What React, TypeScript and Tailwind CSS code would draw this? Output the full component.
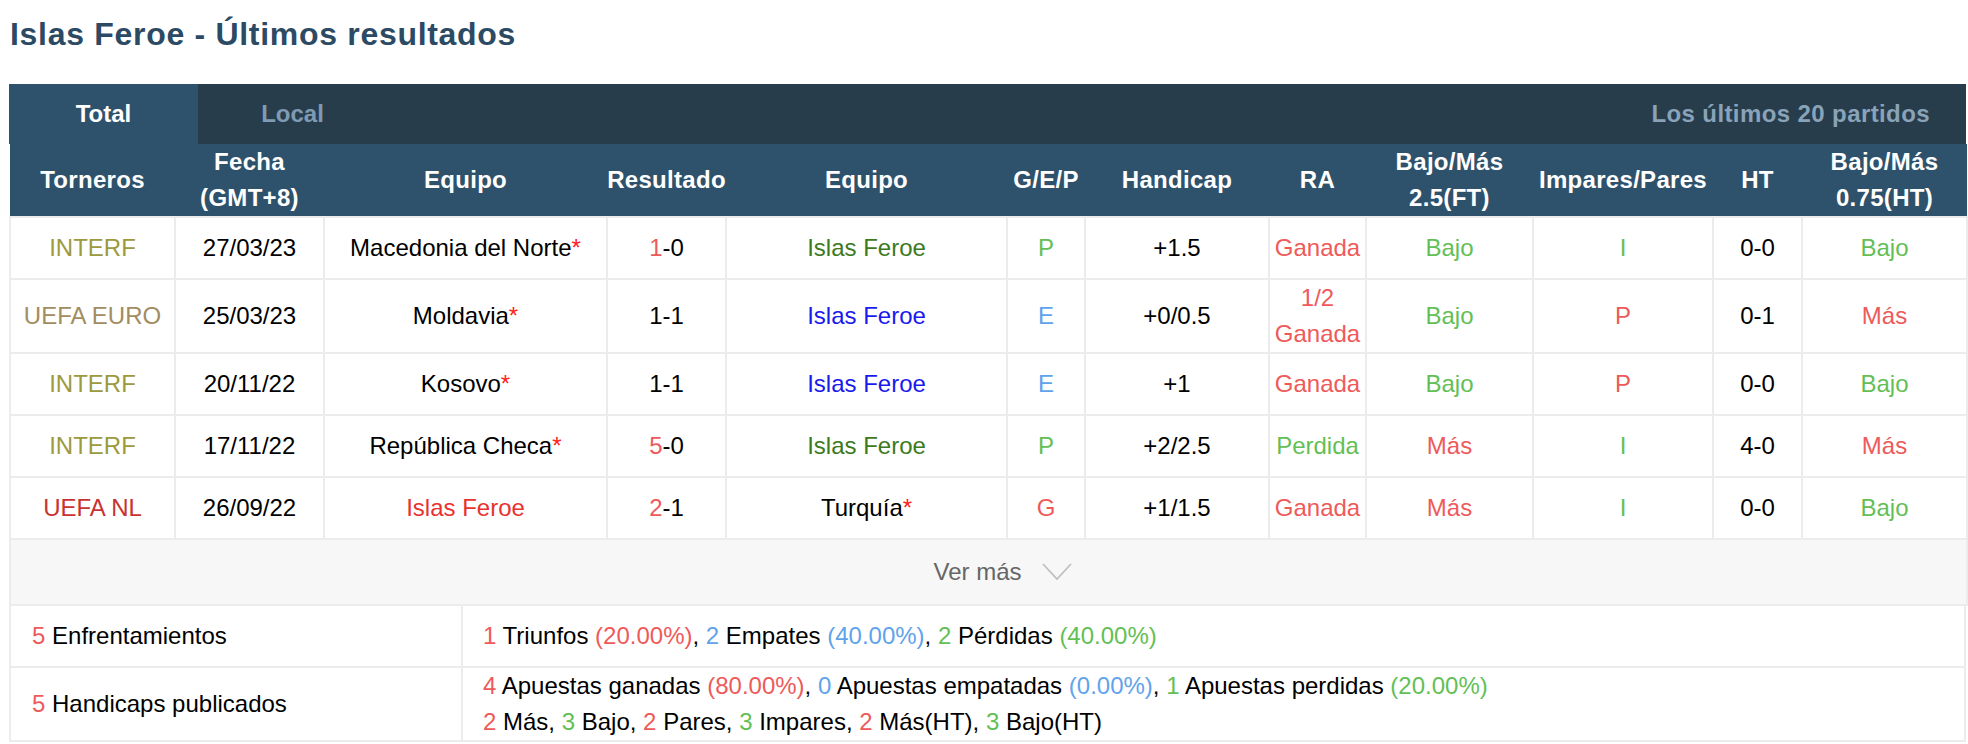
import React from "react"

const RED = "text-[#ee5a5a]"
const GREEN = "text-[#63bf55]"
const BLUE = "text-[#5fa3ec]"

interface Match {
  league: string
  leagueColor: string
  date: string
  home: React.ReactNode
  score: React.ReactNode
  away: React.ReactNode
  gep: string
  gepColor: string
  handicap: string
  ra: React.ReactNode
  ou: string
  oe: string
  ht: string
  ouHt: string
}

const star = <span className="text-[#ff2020]">*</span>

const matches: Match[] = [
  {
    league: "INTERF",
    leagueColor: "text-[#9c9a3c]",
    date: "27/03/23",
    home: <>Macedonia del Norte{star}</>,
    score: (
      <>
        <span className={RED}>1</span>-0
      </>
    ),
    away: <span className="text-[#3c7a1e]">Islas Feroe</span>,
    gep: "P",
    gepColor: GREEN,
    handicap: "+1.5",
    ra: <span className={RED}>Ganada</span>,
    ou: "Bajo",
    oe: "I",
    ht: "0-0",
    ouHt: "Bajo",
  },
  {
    league: "UEFA EURO",
    leagueColor: "text-[#a38c5f]",
    date: "25/03/23",
    home: <>Moldavia{star}</>,
    score: <>1-1</>,
    away: <span className="text-[#1a1aee]">Islas Feroe</span>,
    gep: "E",
    gepColor: BLUE,
    handicap: "+0/0.5",
    ra: (
      <span className={RED}>
        1/2
        <br />
        Ganada
      </span>
    ),
    ou: "Bajo",
    oe: "P",
    ht: "0-1",
    ouHt: "Más",
  },
  {
    league: "INTERF",
    leagueColor: "text-[#9c9a3c]",
    date: "20/11/22",
    home: <>Kosovo{star}</>,
    score: <>1-1</>,
    away: <span className="text-[#1a1aee]">Islas Feroe</span>,
    gep: "E",
    gepColor: BLUE,
    handicap: "+1",
    ra: <span className={RED}>Ganada</span>,
    ou: "Bajo",
    oe: "P",
    ht: "0-0",
    ouHt: "Bajo",
  },
  {
    league: "INTERF",
    leagueColor: "text-[#9c9a3c]",
    date: "17/11/22",
    home: <>República Checa{star}</>,
    score: (
      <>
        <span className={RED}>5</span>-0
      </>
    ),
    away: <span className="text-[#3c7a1e]">Islas Feroe</span>,
    gep: "P",
    gepColor: GREEN,
    handicap: "+2/2.5",
    ra: <span className={GREEN}>Perdida</span>,
    ou: "Más",
    oe: "I",
    ht: "4-0",
    ouHt: "Más",
  },
  {
    league: "UEFA NL",
    leagueColor: "text-[#c83232]",
    date: "26/09/22",
    home: <span className="text-[#e8322f]">Islas Feroe</span>,
    score: (
      <>
        <span className={RED}>2</span>-1
      </>
    ),
    away: <>Turquía{star}</>,
    gep: "G",
    gepColor: RED,
    handicap: "+1/1.5",
    ra: <span className={RED}>Ganada</span>,
    ou: "Más",
    oe: "I",
    ht: "0-0",
    ouHt: "Bajo",
  },
]

const colClasses = [
  "w-[165px]",
  "w-[149px]",
  "w-[283px]",
  "w-[119px]",
  "w-[281px]",
  "w-[78px]",
  "w-[184px]",
  "w-[97px]",
  "w-[167px]",
  "w-[180px]",
  "w-[89px]",
  "w-[165px]",
]

const ouColor = (v: string) => (v === "Bajo" ? GREEN : RED)
const oeColor = (v: string) => (v === "I" ? GREEN : RED)

const td = "border-2 border-[#ececec] text-center align-middle leading-[36px] py-[12px] px-0"

export default function App() {
  return (
    <div className="w-[1968px] h-[744px] bg-white overflow-hidden font-['Liberation_Sans',Arial,sans-serif] text-[24px] text-black">
      <h1 className="pl-[10px] pt-[16px] mb-[31px] text-[32px] leading-[37px] font-bold tracking-[0.7px] text-[#2c4a64]">
        Islas Feroe - Últimos resultados
      </h1>

      <div className="ml-[9px] w-[1957px]">
        {/* tabs */}
        <div className="flex h-[60px] items-center bg-[#283d4c] text-[24px] font-bold">
          <div className="flex h-full w-[189px] items-center justify-center bg-[#2f526c] text-white">
            Total
          </div>
          <div className="flex h-full w-[189px] items-center justify-center text-[#7f9bb3]">
            Local
          </div>
          <div className="ml-auto pr-[36px] tracking-[0.4px] text-[#89a3b9]">Los últimos 20 partidos</div>
        </div>

        <table className="table-fixed border-collapse w-[1957px]">
          <colgroup>
            {colClasses.map((c, i) => (
              <col key={i} className={c} />
            ))}
          </colgroup>
          <thead>
            <tr className="h-[72px] bg-[#2f526c] text-white text-[24px] leading-[36px] tracking-[0.3px]">
              <th className="font-bold">Torneros</th>
              <th className="font-bold">
                Fecha
                <br />
                (GMT+8)
              </th>
              <th className="font-bold">Equipo</th>
              <th className="font-bold">Resultado</th>
              <th className="font-bold">Equipo</th>
              <th className="font-bold">G/E/P</th>
              <th className="font-bold">Handicap</th>
              <th className="font-bold">RA</th>
              <th className="font-bold">
                Bajo/Más
                <br />
                2.5(FT)
              </th>
              <th className="font-bold">Impares/Pares</th>
              <th className="font-bold">HT</th>
              <th className="font-bold">
                Bajo/Más
                <br />
                0.75(HT)
              </th>
            </tr>
          </thead>
          <tbody>
            {matches.map((m, i) => (
              <tr key={`match-${i}`}>
                <td className={`${td} ${m.leagueColor}`}>{m.league}</td>
                <td className={td}>{m.date}</td>
                <td className={td}>{m.home}</td>
                <td className={td}>{m.score}</td>
                <td className={td}>{m.away}</td>
                <td className={`${td} ${m.gepColor}`}>{m.gep}</td>
                <td className={td}>{m.handicap}</td>
                <td className={`${td} !py-0`}>{m.ra}</td>
                <td className={`${td} ${ouColor(m.ou)}`}>{m.ou}</td>
                <td className={`${td} ${oeColor(m.oe)}`}>{m.oe}</td>
                <td className={td}>{m.ht}</td>
                <td className={`${td} ${ouColor(m.ouHt)}`}>{m.ouHt}</td>
              </tr>
            ))}
            <tr>
              <td colSpan={12} className="h-[66px] border-2 border-[#ececec] bg-[#f7f7f7] p-0">
                <div className="flex items-center justify-center gap-[20px] pl-[28px] text-[#666]">
                  <span>Ver más</span>
                  <svg width="30" height="18" viewBox="0 0 30 18" fill="none">
                    <path d="M1 1 L15 16 L29 1" stroke="#bdbdbd" strokeWidth="1.6" />
                  </svg>
                </div>
              </td>
            </tr>
          </tbody>
        </table>

        {/* summary */}
        <table className="table-fixed border-collapse w-[1957px] -mt-[2px]">
          <colgroup>
            <col className="w-[452px]" />
            <col />
          </colgroup>
          <tbody>
            <tr>
              <td className="h-[62px] border-2 border-[#ececec] pl-[21px] leading-[36px]">
                <span className={RED}>5</span> Enfrentamientos
              </td>
              <td className="border-2 border-[#ececec] pl-[20px] leading-[36px]">
                <span className={RED}>1</span> Triunfos <span className={RED}>(20.00%)</span>,{" "}
                <span className={BLUE}>2</span> Empates <span className={BLUE}>(40.00%)</span>,{" "}
                <span className={GREEN}>2</span> Pérdidas <span className={GREEN}>(40.00%)</span>
              </td>
            </tr>
            <tr>
              <td className="h-[74px] border-2 border-[#ececec] pl-[21px] leading-[36px]">
                <span className={RED}>5</span> Handicaps publicados
              </td>
              <td className="border-2 border-[#ececec] pl-[20px] leading-[36px]">
                <div>
                  <span className={RED}>4</span> Apuestas ganadas <span className={RED}>(80.00%)</span>,{" "}
                  <span className={BLUE}>0</span> Apuestas empatadas{" "}
                  <span className={BLUE}>(0.00%)</span>, <span className={GREEN}>1</span> Apuestas
                  perdidas <span className={GREEN}>(20.00%)</span>
                </div>
                <div>
                  <span className={RED}>2</span> Más, <span className={GREEN}>3</span> Bajo,{" "}
                  <span className={RED}>2</span> Pares, <span className={GREEN}>3</span> Impares,{" "}
                  <span className={RED}>2</span> Más(HT), <span className={GREEN}>3</span> Bajo(HT)
                </div>
              </td>
            </tr>
          </tbody>
        </table>
      </div>
    </div>
  )
}
